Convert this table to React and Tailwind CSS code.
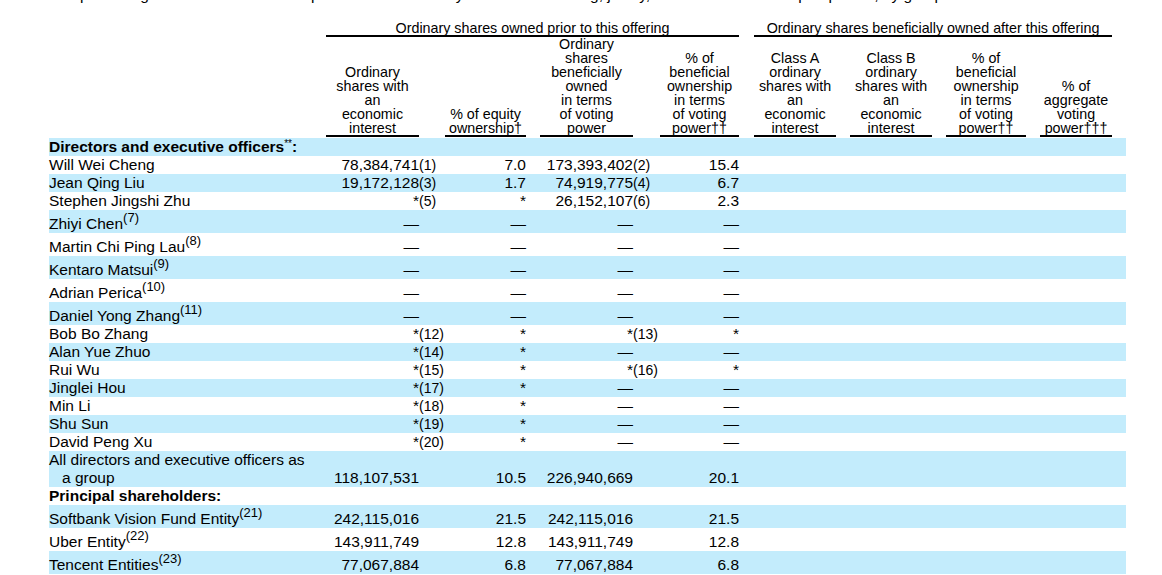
import React from "react";

const heads = [
  ["Ordinary", "shares with", "an", "economic", "interest"],
  ["% of equity", "ownership†"],
  ["Ordinary", "shares", "beneficially", "owned", "in terms", "of voting", "power"],
  ["% of", "beneficial", "ownership", "in terms", "of voting", "power††"],
  ["Class A", "ordinary", "shares with", "an", "economic", "interest"],
  ["Class B", "ordinary", "shares with", "an", "economic", "interest"],
  ["% of", "beneficial", "ownership", "in terms", "of voting", "power††"],
  ["% of", "aggregate", "voting", "power†††"],
];

const D = "—";

const rows = [
  { name: "Directors and executive officers", mark: "**", colon: true, bold: true, h: 18 },
  { name: "Will Wei Cheng", h: 18, v: ["78,384,741", "(1)", "7.0", "", "173,393,402", "(2)", "15.4"] },
  { name: "Jean Qing Liu", h: 18, v: ["19,172,128", "(3)", "1.7", "", "74,919,775", "(4)", "6.7"] },
  { name: "Stephen Jingshi Zhu", h: 18, v: ["*", "(5)", "*", "", "26,152,107", "(6)", "2.3"] },
  { name: "Zhiyi Chen", sup: "(7)", h: 23, v: [D, "", D, "", D, "", D] },
  { name: "Martin Chi Ping Lau", sup: "(8)", h: 23, v: [D, "", D, "", D, "", D] },
  { name: "Kentaro Matsui", sup: "(9)", h: 23, v: [D, "", D, "", D, "", D] },
  { name: "Adrian Perica", sup: "(10)", h: 23, v: [D, "", D, "", D, "", D] },
  { name: "Daniel Yong Zhang", sup: "(11)", h: 23, v: [D, "", D, "", D, "", D] },
  { name: "Bob Bo Zhang", h: 18, v: ["*", "(12)", "*", "", "*", "(13)", "*"] },
  { name: "Alan Yue Zhuo", h: 18, v: ["*", "(14)", "*", "", D, "", D] },
  { name: "Rui Wu", h: 18, v: ["*", "(15)", "*", "", "*", "(16)", "*"] },
  { name: "Jinglei Hou", h: 18, v: ["*", "(17)", "*", "", D, "", D] },
  { name: "Min Li", h: 18, v: ["*", "(18)", "*", "", D, "", D] },
  { name: "Shu Sun", h: 18, v: ["*", "(19)", "*", "", D, "", D] },
  { name: "David Peng Xu", h: 18, v: ["*", "(20)", "*", "", D, "", D] },
  { name: "group", h: 36, v: ["118,107,531", "", "10.5", "", "226,940,669", "", "20.1"] },
  { name: "Principal shareholders:", bold: true, h: 18 },
  { name: "Softbank Vision Fund Entity", sup: "(21)", h: 23, v: ["242,115,016", "", "21.5", "", "242,115,016", "", "21.5"] },
  { name: "Uber Entity", sup: "(22)", h: 23, v: ["143,911,749", "", "12.8", "", "143,911,749", "", "12.8"] },
  { name: "Tencent Entities", sup: "(23)", h: 23, v: ["77,067,884", "", "6.8", "", "77,067,884", "", "6.8"] },
];

const heights = { 18: "h-[18px]", 23: "h-[23px]", 36: "h-[36px]" };

function HeadCell({ lines }) {
  return (
    <th className="p-0 align-bottom border-b-2 border-black text-center font-normal text-[14.3px] leading-[14px]">
      {lines.map((l, i) => (
        <div key={i}>{l}</div>
      ))}
    </th>
  );
}

function Row({ row, shade }) {
  const v = row.v || ["", "", "", "", "", "", ""];
  const bg = shade ? "bg-[#c3ecfc]" : "bg-white";
  return (
    <tr className={`${heights[row.h]} ${bg}`}>
      <td className="p-0 align-bottom whitespace-nowrap">
        {row.name === "group" ? (
          <div className="pl-[13px] -indent-[13px]">
            All directors and executive officers as
            <br />a group
          </div>
        ) : (
          <span className={row.bold ? "font-bold" : ""}>
            {row.name}
            {row.mark && <sup className="text-[10px] font-normal -top-[5px]">{row.mark}</sup>}
            {row.colon && ":"}
            {row.sup && <sup className="text-[13px] -top-[7px]">{row.sup}</sup>}
          </span>
        )}
      </td>
      {v.map((c, i) => (
        <td
          key={i}
          className={
            i % 2 === 0
              ? "p-0 align-bottom text-right whitespace-nowrap"
              : "p-0 align-bottom text-left whitespace-nowrap text-[14px]"
          }
        >
          {c}
        </td>
      ))}
      <td className="p-0" />
      <td className="p-0" />
      <td className="p-0" />
      <td className="p-0" />
      <td className="p-0" />
      <td className="p-0" />
      <td className="p-0" />
      <td className="p-0" />
      <td className="p-0" />
      <td className="p-0" />
    </tr>
  );
}

export default function App() {
  return (
    <div className="min-h-screen bg-white text-black font-['Liberation_Sans',Arial,sans-serif] text-[15.5px] leading-[18px]">
      <p className="-mt-[14px] ml-[49px] w-[960px] whitespace-nowrap overflow-hidden">
        The percentage of beneficial ownership is based on ordinary shares outstanding, jointly, as of the date of this prospectus, by group.
      </p>
      <table className="mt-[17px] ml-[49px] w-[1077px] table-fixed border-separate border-spacing-0">
        <colgroup>
          <col className="w-[277px]" />
          <col className="w-[93px]" />
          <col className="w-[26px]" />
          <col className="w-[81px]" />
          <col className="w-[14px]" />
          <col className="w-[93px]" />
          <col className="w-[27px]" />
          <col className="w-[79px]" />
          <col className="w-[15px]" />
          <col className="w-[82px]" />
          <col className="w-[14px]" />
          <col className="w-[82px]" />
          <col className="w-[14px]" />
          <col className="w-[80px]" />
          <col className="w-[14px]" />
          <col className="w-[72px]" />
          <col className="w-[14px]" />
        </colgroup>
        <thead>
          <tr>
            <th className="p-0" />
            <th colSpan={7} className="p-0 border-b-2 border-black text-center font-normal text-[14.3px] leading-[14px] whitespace-nowrap">
              Ordinary shares owned prior to this offering
            </th>
            <th className="p-0" />
            <th colSpan={7} className="p-0 border-b-2 border-black text-center font-normal text-[14.3px] leading-[14px] whitespace-nowrap">
              Ordinary shares beneficially owned after this offering
            </th>
            <th className="p-0" />
          </tr>
          <tr>
            <th className="p-0" />
            <HeadCell lines={heads[0]} />
            <th className="p-0" />
            <HeadCell lines={heads[1]} />
            <th className="p-0" />
            <HeadCell lines={heads[2]} />
            <th className="p-0" />
            <HeadCell lines={heads[3]} />
            <th className="p-0" />
            <HeadCell lines={heads[4]} />
            <th className="p-0" />
            <HeadCell lines={heads[5]} />
            <th className="p-0" />
            <HeadCell lines={heads[6]} />
            <th className="p-0" />
            <HeadCell lines={heads[7]} />
            <th className="p-0" />
          </tr>
          <tr className="h-px">
            <th colSpan={17} className="p-0" />
          </tr>
        </thead>
        <tbody>
          {rows.map((r, i) => (
            <Row key={i} row={r} shade={i % 2 === 0} />
          ))}
        </tbody>
      </table>
    </div>
  );
}
